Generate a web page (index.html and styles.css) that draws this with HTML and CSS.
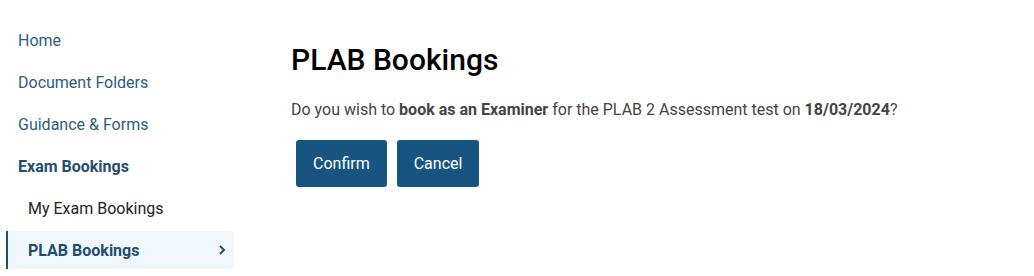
FILE: index.html
```html
<!DOCTYPE html>
<html lang="en">

<head>
    <meta charset="UTF-8">
    <meta name="viewport" content="width=device-width, initial-scale=1.0">
    <title>PLAB Bookings</title>
    <link rel="stylesheet" href="styles.css">
</head>

<body>
    <div class="layout">
        <nav class="sidenav">
            <a class="sidenav_item" href="#">Home</a>
            <a class="sidenav_item" href="#">Document Folders</a>
            <a class="sidenav_item" href="#">Guidance &amp; Forms</a>
            <a class="sidenav_item bold" href="#">Exam Bookings</a>
            <a class="sidenav_item sub" href="#">My Exam Bookings</a>
            <a class="sidenav_item sub bold active" href="#">
                PLAB Bookings
                <svg class="sidenav_chevron" width="8" height="12" viewBox="0 0 8 12">
                    <path d="M2 2 L6 6 L2 10" fill="none" stroke="#1f4e6e" stroke-width="2"/>
                </svg>
            </a>
        </nav>

        <main class="content">
            <h1>PLAB Bookings</h1>
            <p>Do you wish to <b>book as an Examiner</b> for the PLAB 2 Assessment test on <b>18/03/2024</b>?</p>
            <div class="actions">
                <button class="btn" type="button">Confirm</button>
                <button class="btn" type="button">Cancel</button>
            </div>
        </main>
    </div>
</body>

</html>
```

FILE: styles.css
```css
* {
    box-sizing: border-box;
}

body {
    margin: 0;
    font-family: Roboto, "Liberation Sans", sans-serif;
    font-size: 16px;
    color: #444;
    background-color: #fff;
}

.layout {
    display: flex;
}

.sidenav {
    width: 234px;
    padding: 21px 0 0 6px;
    display: flex;
    flex-direction: column;
    gap: 4px;
}

.sidenav_item {
    height: 38px;
    display: flex;
    align-items: center;
    justify-content: space-between;
    padding: 0 8px 0 10px;
    border-left: 2px solid transparent;
    border-radius: 0 4px 4px 0;
    color: #2d5d80;
    text-decoration: none;
}

.sidenav_item.bold {
    font-weight: 700;
    color: #1f4e6e;
}

.sidenav_item.sub {
    padding-left: 20px;
    color: #222;
}

.sidenav_item.sub.bold {
    color: #1f4e6e;
}

.sidenav_item.active {
    background-color: #f0f7fd;
    border-left-color: #1f4e6e;
}

.content {
    padding: 42px 0 0 57px;
}

.content h1 {
    margin: 0;
    font-size: 30px;
    font-weight: 500;
    line-height: 36px;
    color: #000;
}

.content p {
    margin: 20px 0 0;
    line-height: 24px;
}

.actions {
    display: flex;
    gap: 10px;
    margin: 18px 0 0 5px;
}

.btn {
    height: 47px;
    padding: 0 17px;
    border: 0;
    border-radius: 3px;
    background-color: #175580;
    color: #fff;
    font-family: inherit;
    font-size: 16px;
    cursor: pointer;
}
```
